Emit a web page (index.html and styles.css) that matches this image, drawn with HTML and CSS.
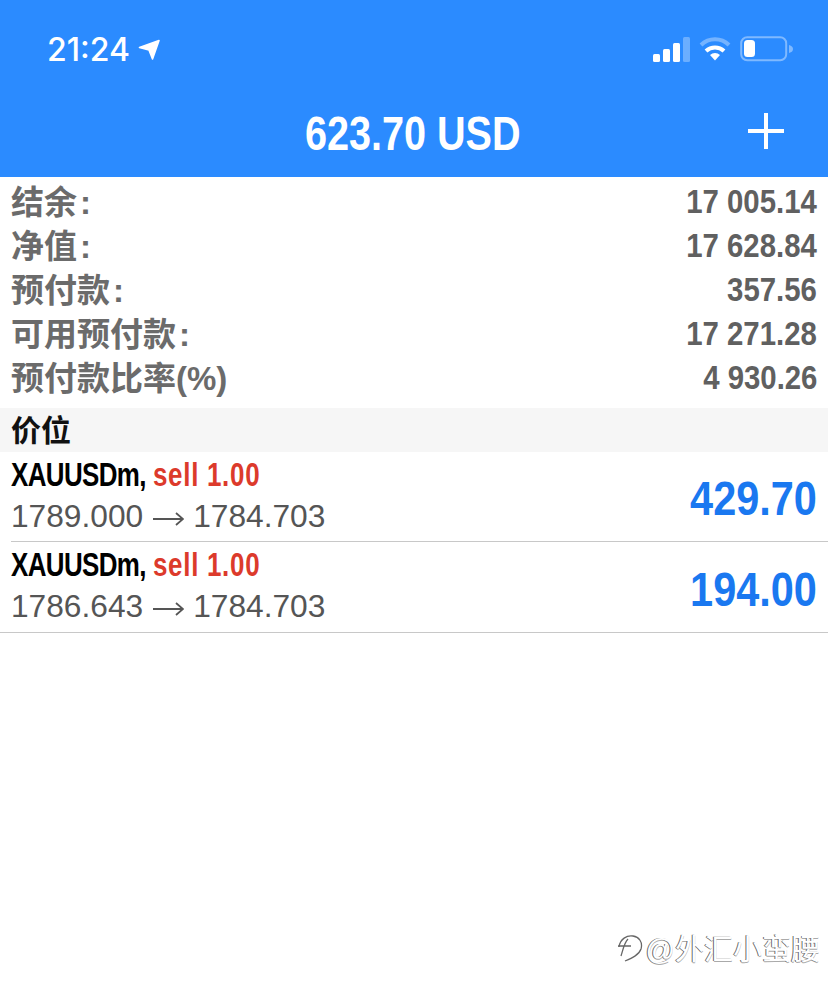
FILE: index.html
```html
<!DOCTYPE html>
<html lang="zh">
<head>
    <meta charset="UTF-8">
    <meta name="viewport" content="width=device-width, initial-scale=1.0">
    <title>623.70 USD</title>
    <link rel="stylesheet" href="styles.css">
</head>
<body>
    <div class="header">
        <div class="statusbar">
            <div class="status-left">
                <span class="clock">21:24</span>
                <svg width="24" height="24" viewBox="0 0 24 24"><path d="M2.5 10.5 L22 3.5 L15.5 22 L12 13 Z" fill="#fff" stroke="#fff" stroke-width="1.6" stroke-linejoin="round"/></svg>
            </div>
            <div class="status-right">
                <svg width="37" height="25" viewBox="0 0 37 25">
                    <rect x="0" y="17" width="7" height="8" rx="1.5" fill="#fff"/>
                    <rect x="10" y="12" width="7" height="13" rx="1.5" fill="#fff"/>
                    <rect x="20" y="6" width="7" height="19" rx="1.5" fill="#fff"/>
                    <rect x="30" y="0" width="7" height="25" rx="1.5" fill="#fff" opacity="0.3"/>
                </svg>
                <svg width="32" height="24" viewBox="0 0 32 24">
                    <path d="M2 8 A20 20 0 0 1 30 8" fill="none" stroke="#fff" stroke-width="4" opacity="0.35"/>
                    <path d="M7 14 A13 13 0 0 1 25 14" fill="none" stroke="#fff" stroke-width="4"/>
                    <path d="M11 18 L16 23.5 L21 18 A7.5 7.5 0 0 0 11 18 Z" fill="#fff"/>
                </svg>
                <svg width="54" height="26" viewBox="0 0 54 26">
                    <rect x="1.2" y="1.2" width="45" height="23" rx="6" fill="none" stroke="#fff" stroke-width="2" opacity="0.4"/>
                    <rect x="4" y="4" width="11" height="17" rx="3.5" fill="#fff"/>
                    <path d="M49 9 C52 10 53 11 53 13 C53 15 52 16 49 17 Z" fill="#fff" opacity="0.4"/>
                </svg>
            </div>
        </div>
        <div class="titlebar">
            <h1>623.70 USD</h1>
            <svg class="add" width="38" height="38" viewBox="0 0 38 38"><path d="M19 1 V37 M1 19 H37" stroke="#fff" stroke-width="4"/></svg>
        </div>
    </div>

    <div class="summary">
        <div class="summary-row"><span class="label">结余<span class="colon">:</span></span><span class="num">17 005.14</span></div>
        <div class="summary-row"><span class="label">净值<span class="colon">:</span></span><span class="num">17 628.84</span></div>
        <div class="summary-row"><span class="label">预付款<span class="colon">:</span></span><span class="num">357.56</span></div>
        <div class="summary-row"><span class="label">可用预付款<span class="colon">:</span></span><span class="num">17 271.28</span></div>
        <div class="summary-row"><span class="label">预付款比率<span class="percent">(%)</span></span><span class="num">4 930.26</span></div>
    </div>

    <div class="section-title">价位</div>

    <div class="position inset">
        <div class="pos-info">
            <div class="pos-name"><span class="symbol">XAUUSDm,</span> <span class="sell">sell 1.00</span></div>
            <div class="pos-price">1789.000<svg class="arrow" width="31" height="16" viewBox="0 0 31 16"><path d="M0 8 H29 M23 2 L30 8 L23 14" fill="none" stroke="#555" stroke-width="1.8"/></svg>1784.703</div>
        </div>
        <div class="profit">429.70</div>
    </div>
    <div class="position">
        <div class="pos-info">
            <div class="pos-name"><span class="symbol">XAUUSDm,</span> <span class="sell">sell 1.00</span></div>
            <div class="pos-price">1786.643<svg class="arrow" width="31" height="16" viewBox="0 0 31 16"><path d="M0 8 H29 M23 2 L30 8 L23 14" fill="none" stroke="#555" stroke-width="1.8"/></svg>1784.703</div>
        </div>
        <div class="profit">194.00</div>
    </div>

    <div class="watermark">
        <svg width="26" height="30" viewBox="0 0 26 30"><path d="M2 15 C3 7 10 3 16 4 C22 5 26 10 24 17 C22 23 15 26 8 29 M1 14 H14 M11 7 C7 11 6 18 4 24" fill="none" stroke="#666" stroke-width="1.3"/></svg>
        <span>@外汇小蛮腰</span>
    </div>
</body>
</html>
```

FILE: styles.css
```css
body {
    font-family: "Liberation Sans", "Noto Sans CJK SC", sans-serif;
    margin: 0;
    padding: 0;
    background-color: #fff;
    position: relative;
    height: 998px;
    overflow: hidden;
}
.header {
    background-color: #2b8bff;
    color: #fff;
    height: 177px;
}
.statusbar {
    display: flex;
    justify-content: space-between;
    align-items: center;
    height: 98px;
    padding: 0 34px 0 47px;
    box-sizing: border-box;
}
.status-left {
    display: flex;
    align-items: center;
    gap: 7px;
}
.clock {
    font-family: "Inter", sans-serif;
    font-size: 32px;
    font-weight: 500;
}
.status-right {
    display: flex;
    align-items: center;
    gap: 9px;
}
.titlebar {
    display: flex;
    justify-content: center;
    align-items: center;
    height: 70px;
    padding-right: 2px;
    position: relative;
}
.titlebar h1 {
    margin: 0;
    font-size: 48px;
    font-weight: bold;
    transform: scaleX(0.825);
}
.add {
    position: absolute;
    right: 43px;
    top: 14px;
}
.summary {
    padding: 3px 11px 8px;
}
.summary-row {
    display: flex;
    justify-content: space-between;
    align-items: center;
    height: 44px;
    color: #666;
}
.label {
    font-size: 33px;
    font-weight: bold;
    line-height: 38px;
    margin-top: 1px;
    color: #6b6b6b;
}
.colon {
    margin-left: 3px;
}
.percent {
    font-size: 33px;
}
.num {
    font-size: 33px;
    font-weight: bold;
    color: #606060;
    transform: scaleX(0.89);
    transform-origin: right center;
}
.section-title {
    background-color: #f6f6f6;
    height: 44px;
    line-height: 46px;
    padding-left: 11px;
    font-size: 30px;
    font-weight: bold;
    color: #111;
}
.position {
    display: flex;
    justify-content: space-between;
    align-items: center;
    height: 91px;
    padding: 0 11px;
    border-bottom: 1px solid #c8c8c8;
    box-sizing: border-box;
}
.position.inset {
    height: 90px;
    margin-left: 11px;
    padding-left: 0;
}
.pos-info {
    padding-bottom: 4px;
}
.pos-name {
    font-size: 33px;
    font-weight: bold;
    color: #000;
    line-height: 42px;
    transform: scaleX(0.786);
    transform-origin: left center;
    white-space: nowrap;
}
.symbol {
    letter-spacing: -0.8px;
}
.sell {
    color: #dc3a2b;
    letter-spacing: 0.9px;
}
.pos-price {
    font-size: 31.7px;
    color: #555;
    line-height: 40px;
    white-space: nowrap;
}
.arrow {
    margin: 0 9.5px;
}
.profit {
    font-size: 48px;
    font-weight: bold;
    color: #1a78f0;
    padding-top: 4px;
    transform: scaleX(0.863);
    transform-origin: right center;
}
.watermark {
    position: absolute;
    right: 8px;
    top: 926px;
    display: flex;
    align-items: center;
    gap: 3px;
    font-size: 29px;
    color: #fff;
    text-shadow: -1px 0 0 #666, 0 1px 0 #aaa;
}
```
